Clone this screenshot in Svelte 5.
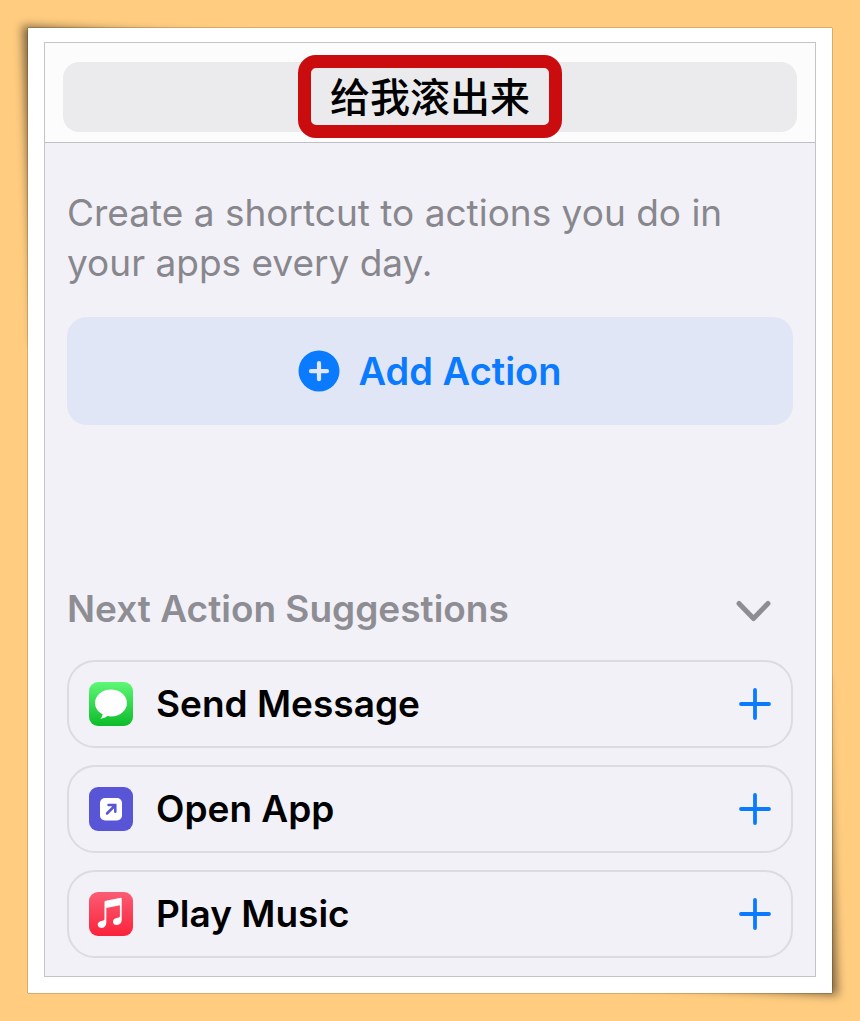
<script lang="ts">
  type Glyph = 'message' | 'open' | 'music';

  interface Suggestion {
    glyph: Glyph;
    label: string;
  }

  const suggestions: Suggestion[] = [
    { glyph: 'message', label: 'Send Message' },
    { glyph: 'open', label: 'Open App' },
    { glyph: 'music', label: 'Play Music' },
  ];

  let name = $state('给我滚出来');
  let expanded = $state(true);
</script>

<main class="page">
  <div class="frame">
    <div class="sheet">
      <div class="panel">
        <header class="top-bar">
          <div class="name-field">
            <input class="name-input" type="text" aria-label="Shortcut name" bind:value={name} />
            <span class="marker" aria-hidden="true"></span>
          </div>
        </header>

        <div class="content">
          <p class="intro">Create a shortcut to actions you do in your apps every day.</p>

          <button class="add-action" type="button">
            <svg width="42" height="42" viewBox="0 0 42 42" aria-hidden="true">
              <circle cx="21" cy="21" r="20.5" fill="#0a7aff" />
              <path d="M21 13.200v16M13 21.200h16" stroke="#e1e6f6" stroke-width="4.200" stroke-linecap="round" />
            </svg>
            <span>Add Action</span>
          </button>

          <section class="suggestions">
            <button
              class="section-toggle"
              type="button"
              aria-expanded={expanded}
              onclick={() => (expanded = !expanded)}
            >
              <span>Next Action Suggestions</span>
              <svg class="chevron" class:closed={!expanded} width="36" height="28" viewBox="0 0 36 28" fill="none" aria-hidden="true">
                <path d="M3 8.500 17.500 23.500 32 8.500" stroke="currentColor" stroke-width="5" stroke-linecap="round" stroke-linejoin="round" />
              </svg>
            </button>

            {#if expanded}
              <ul class="list">
                {#each suggestions as item (item.glyph)}
                  <li>
                    <button class="row" type="button">
                      <svg width="44" height="44" viewBox="0 0 44 44" aria-hidden="true">
                        {#if item.glyph === 'message'}
                          <defs>
                            <linearGradient id="message-fill" x1="0" y1="0" x2="0" y2="1">
                              <stop offset="0" stop-color="#5ff777" />
                              <stop offset="1" stop-color="#0cbc29" />
                            </linearGradient>
                          </defs>
                          <rect width="44" height="44" rx="9" fill="url(#message-fill)" />
                          <path
                            d="M22 7.500c8.900 0 16 6 16 13.500s-7.100 13.500-16 13.500c-1.300 0-2.500-.1-3.700-.4-1.600 1.400-4 2.500-6.900 2.600 1.200-1.100 2.100-2.600 2.200-4.400C9 30 6 25.800 6 21 6 13.500 13.100 7.500 22 7.500Z"
                            fill="#fff"
                          />
                        {:else if item.glyph === 'open'}
                          <rect width="44" height="44" rx="9" fill="#5856d6" />
                          <rect x="11" y="11" width="22" height="22.500" rx="5" fill="#fff" />
                          <path d="M18 26.500 26 18.500M19.500 18H26.300V24.800" fill="none" stroke="#5856d6" stroke-width="2.500" stroke-linecap="round" />
                        {:else}
                          <defs>
                            <linearGradient id="music-fill" x1="0" y1="0" x2="0" y2="1">
                              <stop offset="0" stop-color="#fb5c74" />
                              <stop offset="1" stop-color="#fa233b" />
                            </linearGradient>
                          </defs>
                          <rect width="44" height="44" rx="9" fill="url(#music-fill)" />
                          <path
                            d="M31.600 5.800c.7-.1 1.100.2 1.100.9v21.300c0 3-1.900 4.700-4.700 5-2.300.2-4-1.200-4-3.300 0-2 1.400-3.300 3.600-3.700l2-.4c.9-.2 1.300-.6 1.300-1.500V13.300L17.300 16v14.700c0 3-1.700 4.900-4.500 5.200-2.400.2-4.100-1.200-4.100-3.300 0-2 1.500-3.300 3.600-3.700l2-.4c.8-.2 1.200-.6 1.200-1.500V10.400c0-.9.400-1.400 1.300-1.600Z"
                            fill="#fff"
                          />
                        {/if}
                      </svg>
                      <span class="row-label">{item.label}</span>
                      <svg width="32" height="32" viewBox="0 0 32 32" aria-hidden="true">
                        <path d="M16 2v28M2 16h28" stroke="#0a7aff" stroke-width="3.800" stroke-linecap="round" />
                      </svg>
                    </button>
                  </li>
                {/each}
              </ul>
            {/if}
          </section>
        </div>
      </div>
    </div>
  </div>
</main>

<style>
  :global(body) {
    background: #ffcc80;
  }

  .page {
    box-sizing: border-box;
    padding: 28px;
    overflow: hidden;
    font-family: Inter, 'Noto Sans CJK SC', sans-serif;
  }

  button,
  input {
    box-sizing: border-box;
    margin: 0;
    border: 0;
    background: none;
    font-family: inherit;
  }

  button {
    cursor: pointer;
  }

  svg {
    flex: none;
  }

  .frame {
    position: relative;
    isolation: isolate;
  }

  /* Skewed blocks behind the sheet give two opposite corners a lifted look. */
  .frame::before,
  .frame::after {
    content: '';
    position: absolute;
    z-index: -1;
    width: 240px;
    height: 320px;
    background: rgb(0 0 0 / 50%);
    filter: blur(5px);
    transform: skew(2deg, 3deg);
  }

  .frame::before {
    top: 4px;
    left: 0;
  }

  .frame::after {
    right: 0;
    bottom: 4px;
  }

  .sheet {
    padding: 14px 16px 16px;
    background: #fff;
    box-shadow: 0 0 1px rgb(0 0 0 / 90%);
  }

  .panel {
    border: 1px solid #c4c3c7;
    background: #f2f1f7;
  }

  .top-bar {
    padding: 19px 18px 10px;
    border-bottom: 1px solid #c0c0c3;
    background: #fcfcfd;
  }

  .name-field {
    position: relative;
  }

  .name-input {
    display: block;
    width: 100%;
    height: 70px;
    padding: 0 16px 4px;
    border-radius: 16px;
    background: #ebebed;
    color: #000;
    font-size: 40px;
    font-weight: 500;
    text-align: center;
  }

  .marker {
    position: absolute;
    top: -7px;
    left: 50%;
    box-sizing: border-box;
    width: 264px;
    height: 83px;
    border: 13px solid #cb0c0f;
    border-radius: 18px;
    transform: translateX(-50%);
    pointer-events: none;
  }

  .content {
    padding: 45px 22px 18px;
  }

  .intro {
    margin: 0;
    color: #88878d;
    font-size: 37px;
    line-height: 50px;
  }

  .add-action {
    display: flex;
    align-items: center;
    justify-content: center;
    gap: 18px;
    width: 100%;
    height: 108px;
    margin-top: 29px;
    border-radius: 20px;
    background: #e1e6f6;
    color: #0a7aff;
    font-size: 38px;
    font-weight: 600;
  }

  .suggestions {
    margin-top: 160px;
  }

  .section-toggle {
    display: flex;
    align-items: center;
    justify-content: space-between;
    width: 100%;
    padding: 0 21px 0 0;
    color: #8e8d93;
    font-size: 37px;
    font-weight: 600;
    line-height: 48px;
  }

  .chevron.closed {
    transform: rotate(-90deg);
  }

  .list {
    display: flex;
    flex-direction: column;
    gap: 17px;
    margin: 27px 0 0;
    padding: 0;
    list-style: none;
  }

  .row {
    display: flex;
    align-items: center;
    width: 100%;
    height: 88px;
    padding: 0 20px;
    border: 2px solid #dcdbe0;
    border-radius: 28px;
    color: #000;
    font-size: 37px;
    font-weight: 600;
    text-align: left;
  }

  .row-label {
    flex: 1;
    margin-left: 23px;
    padding-bottom: 2px;
  }
</style>
